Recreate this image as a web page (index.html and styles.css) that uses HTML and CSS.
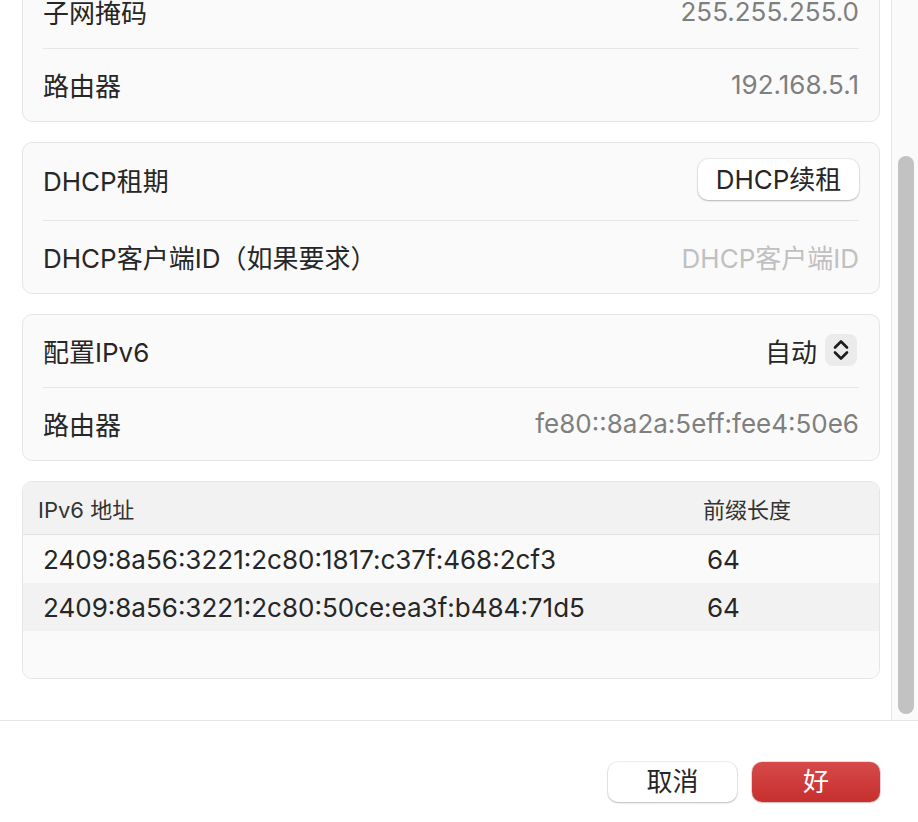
FILE: index.html
```html
<!DOCTYPE html>
<html lang="zh-CN">
<head>
<meta charset="utf-8">
<title>网络设置</title>
<link rel="stylesheet" href="styles.css">
</head>
<body>
<div class="window">
  <div class="main">
    <div class="content">
      <section class="card card-first">
        <div class="row"><span class="label">子网掩码</span><span class="value">255.255.255.0</span></div>
        <div class="row"><span class="label">路由器</span><span class="value">192.168.5.1</span></div>
      </section>
      <section class="card">
        <div class="row row-tall"><span class="label">DHCP租期</span><button class="btn btn-renew">DHCP续租</button></div>
        <div class="row"><span class="label">DHCP客户端ID（如果要求）</span><span class="placeholder">DHCP客户端ID</span></div>
      </section>
      <section class="card">
        <div class="row">
          <span class="label">配置IPv6</span>
          <span class="popup">
            <span class="popup-text">自动</span>
            <span class="stepper">
              <svg width="18" height="24" viewBox="0 0 18 24" aria-hidden="true">
                <path d="M3 9.5 L9 3.5 L15 9.5" fill="none" stroke="#1c1c1c" stroke-width="2.6" stroke-linecap="round" stroke-linejoin="round"/>
                <path d="M3 14.5 L9 20.5 L15 14.5" fill="none" stroke="#1c1c1c" stroke-width="2.6" stroke-linecap="round" stroke-linejoin="round"/>
              </svg>
            </span>
          </span>
        </div>
        <div class="row"><span class="label">路由器</span><span class="value">fe80::8a2a:5eff:fee4:50e6</span></div>
      </section>
      <section class="card table">
        <div class="thead"><span>IPv6 地址</span><span>前缀长度</span></div>
        <div class="trow"><span>2409:8a56:3221:2c80:1817:c37f:468:2cf3</span><span>64</span></div>
        <div class="trow alt"><span>2409:8a56:3221:2c80:50ce:ea3f:b484:71d5</span><span>64</span></div>
        <div class="trow empty"></div>
      </section>
    </div>
    <div class="scrollbar"><div class="thumb"></div></div>
  </div>
  <div class="footer">
    <button class="btn btn-cancel">取消</button>
    <button class="btn btn-ok">好</button>
  </div>
</div>
</body>
</html>
```

FILE: styles.css
```css
* { box-sizing: border-box; }
html, body {
  margin: 0;
  padding: 0;
  background: #ffffff;
}
body {
  font-family: "Inter", "Noto Sans CJK SC", sans-serif;
  font-size: 26px;
  color: #262626;
  width: 918px;
  height: 822px;
  overflow: hidden;
}
.window {
  display: flex;
  flex-direction: column;
  height: 822px;
}
.main {
  display: flex;
  height: 720px;
  overflow: hidden;
}
.content {
  flex: 1;
  overflow: hidden;
  display: flex;
  flex-direction: column;
  gap: 20px;
  padding: 0 11px 0 22px;
}
.card {
  flex: none;
  background: #fafafa;
  border: 1px solid #e5e5e5;
  border-radius: 10px;
}
.card-first {
  margin-top: -25px;
}
.row {
  display: flex;
  align-items: center;
  justify-content: space-between;
  height: 72px;
  margin: 0 20px;
  padding-bottom: 2px;
}
.row + .row {
  border-top: 1px solid #e6e6e6;
  height: 73px;
}
.row-tall {
  height: 77px;
  padding-bottom: 4px;
}
.label {
  color: #262626;
  white-space: nowrap;
}
.value {
  color: #7f7f7f;
  white-space: nowrap;
}
.placeholder {
  color: #c0c0c0;
  white-space: nowrap;
}
.btn {
  font-family: "Inter", "Noto Sans CJK SC", sans-serif;
  font-size: 26px;
  border: none;
  border-radius: 10px;
  height: 41px;
  padding: 0 17px;
  color: #262626;
  background: #ffffff;
  box-shadow: 0 0 0 1px rgba(0,0,0,0.06), 0 1px 2px rgba(0,0,0,0.22);
  line-height: 41px;
}
.btn-renew {
  width: 161px;
  padding: 0;
  margin-right: 0;
}
.popup {
  display: flex;
  align-items: center;
  gap: 8px;
  margin-right: 2px;
}
.popup-text { color: #262626; }
.stepper {
  width: 32px;
  height: 32px;
  border-radius: 8px;
  background: #ebebeb;
  display: flex;
  align-items: center;
  justify-content: center;
}
.table {
  overflow: hidden;
}
.thead {
  display: grid;
  grid-template-columns: 665px 1fr;
  align-items: center;
  height: 53px;
  padding-left: 15px;
  background: #f2f2f2;
  border-bottom: 1.5px solid #e2e2e2;
  font-size: 22px;
  color: #333333;
}
.trow {
  display: grid;
  grid-template-columns: 664px 1fr;
  align-items: center;
  height: 48px;
  padding-left: 20px;
  background: #fafafa;
  color: #262626;
}
.trow.alt { background: #f2f2f2; }
.trow.empty { height: 47px; }
.scrollbar {
  flex: none;
  width: 27px;
  border-left: 1px solid #e6e6e6;
  background: #fafafa;
  display: flex;
  flex-direction: column;
  padding: 156px 4px 6px 6px;
}
.thumb {
  flex: 1;
  background: #c2c2c2;
  border-radius: 8px;
}
.footer {
  flex: 1;
  border-top: 1px solid #e5e5e5;
  display: flex;
  justify-content: flex-end;
  align-items: flex-start;
  gap: 15px;
  padding: 41px 38px 0 0;
  background: #ffffff;
}
.btn-cancel {
  width: 129px;
  height: 40px;
  line-height: 40px;
  padding: 0;
}
.btn-ok {
  width: 128px;
  height: 40px;
  line-height: 40px;
  padding: 0;
  color: #ffffff;
  background: linear-gradient(#d64a4a, #c62f2d);
  box-shadow: 0 0 0 0.5px rgba(160,30,30,0.3), 0 1px 2px rgba(0,0,0,0.18);
}
```
